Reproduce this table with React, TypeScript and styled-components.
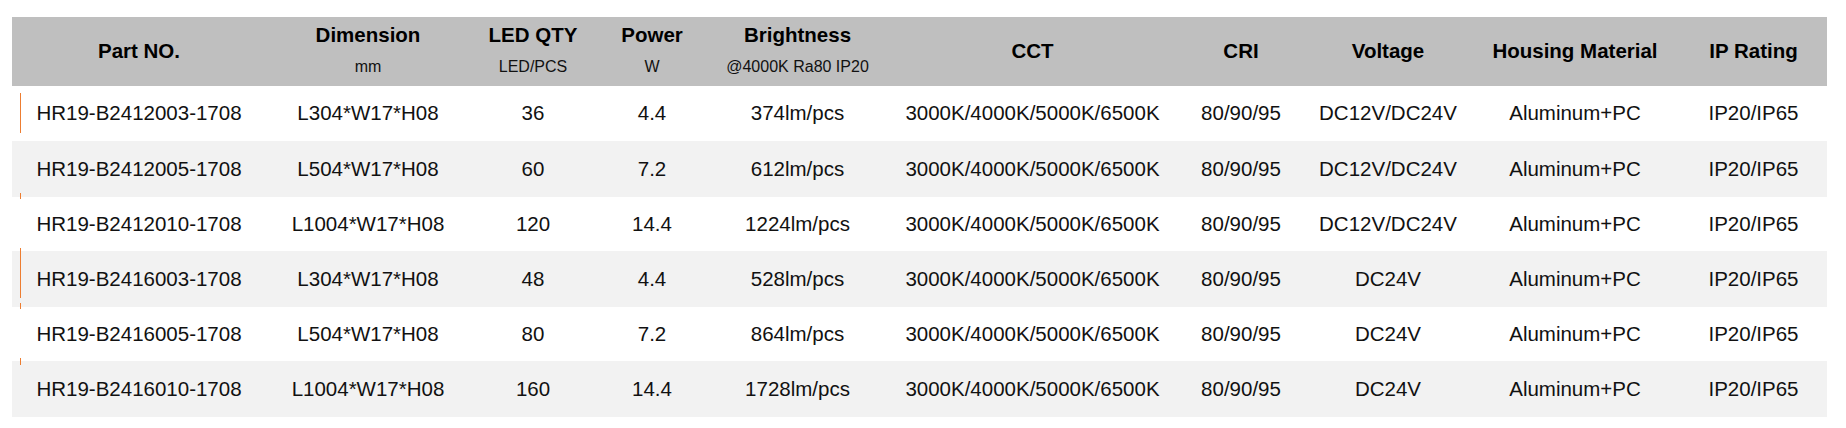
import styled, { createGlobalStyle } from "styled-components";

const GlobalStyle = createGlobalStyle`
  html, body {
    margin: 0;
    padding: 0;
    background: #ffffff;
  }
  body {
    font-family: "Liberation Sans", Arial, sans-serif;
  }
`;

const columns = "254px 204px 126px 112px 179px 291px 126px 168px 206px 149px";

const headers = [
  { title: "Part NO." },
  { title: "Dimension", sub: "mm" },
  { title: "LED QTY", sub: "LED/PCS" },
  { title: "Power", sub: "W" },
  { title: "Brightness", sub: "@4000K Ra80 IP20" },
  { title: "CCT" },
  { title: "CRI" },
  { title: "Voltage" },
  { title: "Housing Material" },
  { title: "IP Rating" },
];

const rows = [
  ["HR19-B2412003-1708", "L304*W17*H08", "36", "4.4", "374lm/pcs", "DC12V/DC24V"],
  ["HR19-B2412005-1708", "L504*W17*H08", "60", "7.2", "612lm/pcs", "DC12V/DC24V"],
  ["HR19-B2412010-1708", "L1004*W17*H08", "120", "14.4", "1224lm/pcs", "DC12V/DC24V"],
  ["HR19-B2416003-1708", "L304*W17*H08", "48", "4.4", "528lm/pcs", "DC24V"],
  ["HR19-B2416005-1708", "L504*W17*H08", "80", "7.2", "864lm/pcs", "DC24V"],
  ["HR19-B2416010-1708", "L1004*W17*H08", "160", "14.4", "1728lm/pcs", "DC24V"],
];

// little orange caret marks along the left edge (offsets from table top)
const marks = [
  { top: 76, h: 40 },
  { top: 176, h: 6 },
  { top: 231, h: 50 },
  { top: 286, h: 6 },
  { top: 341, h: 7 },
];

const App = () => {
  return (
    <>
      <GlobalStyle />
      <Page>
        <Table>
          <HeaderRow>
            {headers.map((h, i) => (
              <HeadCell key={h.title} $last={i === headers.length - 1}>
                {h.sub ? (
                  <>
                    <HeadTitle>{h.title}</HeadTitle>
                    <HeadSub>{h.sub}</HeadSub>
                  </>
                ) : (
                  <HeadSingle>{h.title}</HeadSingle>
                )}
              </HeadCell>
            ))}
          </HeaderRow>

          {rows.map((r, i) => {
            const cells = [
              r[0],
              r[1],
              r[2],
              r[3],
              r[4],
              "3000K/4000K/5000K/6500K",
              "80/90/95",
              r[5],
              "Aluminum+PC",
              "IP20/IP65",
            ];
            return (
              <Row key={r[0]} $striped={i % 2 === 1}>
                {cells.map((c, j) => (
                  <Cell key={j} $last={j === cells.length - 1}>
                    {c}
                  </Cell>
                ))}
              </Row>
            );
          })}

          {marks.map((m, i) => (
            <Mark key={i} $top={m.top} $h={m.h} />
          ))}
        </Table>
      </Page>
    </>
  );
};

export default App;

const Page = styled.div`
  width: 1846px;
  height: 428px;
  padding: 17px 0 0 12px;
  box-sizing: border-box;
  background: #ffffff;
`;

const Table = styled.div`
  position: relative;
  width: 1815px;
  display: flex;
  flex-direction: column;
`;

const HeaderRow = styled.div`
  display: grid;
  grid-template-columns: ${columns};
  height: 69px;
  background: #bfbfbf;
`;

const HeadCell = styled.div<{ $last?: boolean }>`
  display: flex;
  flex-direction: column;
  align-items: center;
  justify-content: center;
  padding: 1px 0 4px ${(p) => (p.$last ? "2px" : "0")};
  color: #000000;
  white-space: nowrap;
`;

const HeadTitle = styled.div`
  font-size: 20.5px;
  font-weight: 700;
  line-height: 34px;
`;

const HeadSub = styled.div`
  font-size: 16px;
  font-weight: 400;
  line-height: 30px;
  color: #111111;
`;

const HeadSingle = styled.div`
  font-size: 20.5px;
  font-weight: 700;
  line-height: 34px;
  margin-top: 1px;
`;

const Row = styled.div<{ $striped?: boolean }>`
  display: grid;
  grid-template-columns: ${columns};
  height: ${(p) => (p.$striped ? "56px" : "54px")};
  background: ${(p) => (p.$striped ? "#f2f2f2" : "#ffffff")};

  &:nth-child(2) {
    height: 55px;
  }
`;

const Cell = styled.div<{ $last?: boolean }>`
  display: flex;
  align-items: center;
  justify-content: center;
  padding-left: ${(p) => (p.$last ? "2px" : "0")};
  padding-bottom: 1px;
  font-size: 20.5px;
  color: #111111;
  white-space: nowrap;
`;

const Mark = styled.span<{ $top: number; $h: number }>`
  position: absolute;
  left: 8px;
  top: ${(p) => p.$top}px;
  width: 1px;
  height: ${(p) => p.$h}px;
  background: #ed7d31;
`;
